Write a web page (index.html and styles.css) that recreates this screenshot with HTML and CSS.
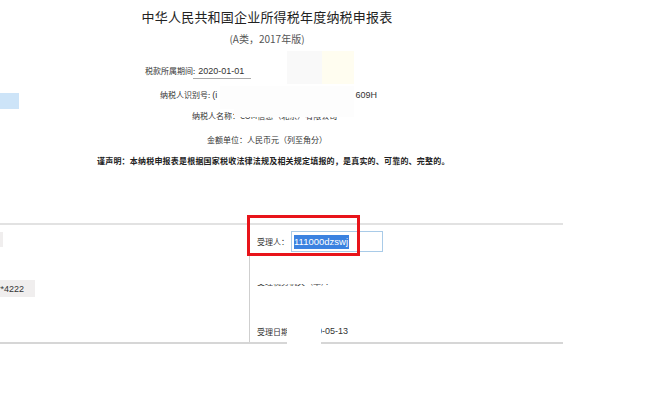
FILE: index.html
```html
<!DOCTYPE html>
<html lang="zh">
<head>
<meta charset="utf-8">
<title>企业所得税年度纳税申报表</title>
<link rel="stylesheet" href="styles.css">
</head>
<body>
<div class="page">
  <div class="head">
    <div class="title">中华人民共和国企业所得税年度纳税申报表</div>
    <div class="sub">(A类，2017年版)</div>
  </div>

  <div class="row r1">
    <span class="lbl">税款所属期间:</span><span class="val under">2020-01-01</span>
  </div>
  <div class="row r2">
    <span class="sel-bit"></span>
    <span class="idline"><span class="lbl">纳税人识别号:</span><span class="val">(i</span><span class="val tail">609H</span></span>
  </div>
  <div class="row r3">
    <span class="lbl">纳税人名称：</span><span class="lbl">COM信息（北京）有限公司</span>
  </div>
  <div class="row r4">
    <span class="lbl">金额单位：人民币元（列至角分）</span>
  </div>
  <div class="row r5">
    <span class="decl">谨声明：本纳税申报表是根据国家税收法律法规及相关规定填报的，是真实的、可靠的、完整的。</span>
  </div>

  <div class="table">
    <div class="col left">
      <div class="box b1"></div>
      <div class="box b2"><span class="val">**4222</span></div>
    </div>
    <div class="col right">
      <div class="frow fa">
        <span class="lbl">受理人：</span>
        <div class="input"><span class="hl">111000dzswj</span></div>
      </div>
      <div class="clip"><span class="lbl">受理税务机关（章）：</span></div>
      <div class="frow fc">
        <span class="lbl">受理日期：</span><span class="val">2020-05-13</span>
      </div>
    </div>
  </div>

  <div class="mask m1"></div>
  <div class="mask m2"></div>
  <div class="mask m3"></div>
  <div class="mask m5"></div>
  <div class="mask m4"></div>
  <div class="redbox"></div>
</div>
</body>
</html>
```
FILE: styles.css
```css
html, body {
  margin: 0;
  padding: 0;
  background: #fff;
}
body {
  font-family: "Noto Sans CJK SC", "Microsoft YaHei", sans-serif;
  color: #333;
}
.page {
  position: relative;
  width: 650px;
  height: 395px;
  overflow: hidden;
}
.head {
  width: 534px;
  text-align: center;
  padding-top: 8px;
}
.title {
  font-size: 13px;
  line-height: 18px;
  color: #222;
  letter-spacing: 0.2px;
}
.sub {
  font-size: 10px;
  line-height: 14px;
  margin-top: 6px;
  color: #555;
}
.row {
  display: flex;
  align-items: center;
  height: 16px;
  line-height: 16px;
  white-space: nowrap;
}
.lbl {
  font-size: 8px;
  color: #333;
}
.val {
  font-family: "Liberation Sans", Arial, sans-serif;
  font-size: 9px;
  color: #333;
}
.r1 {
  margin-top: 17px;
  padding-left: 145px;
}
.under {
  box-sizing: border-box;
  width: 58px;
  height: 16px;
  padding-left: 5px;
  border-bottom: 1px solid #aaa;
  margin-left: -2px;
}
.r2 {
  margin-top: 8px;
  height: 22px;
  align-items: flex-start;
}
.sel-bit {
  width: 19px;
  height: 16px;
  margin-top: 6px;
  background: #cde4f8;
  flex: none;
}
.idline {
  display: flex;
  width: 217px;
  margin-left: 141px;
}
.idline .val { margin-left: 2px; }
.idline .tail { margin-left: auto; }
.r3 {
  margin-top: -1px;
  padding-left: 192px;
}
.r4 {
  margin-top: 8px;
  padding-left: 207px;
}
.r5 {
  margin-top: 5px;
  padding-left: 97px;
}
.decl {
  font-size: 8px;
  font-weight: bold;
  color: #222;
  letter-spacing: 0.2px;
}
.table {
  margin-top: 54px;
  width: 563px;
  height: 117px;
  border-top: 2px solid #e2e2e2;
  border-bottom: 2px solid #d6d6d6;
  display: grid;
  grid-template-columns: 249px 1fr;
}
.col.right {
  border-left: 1px solid #cfcfcf;
  padding-left: 7px;
}
.box {
  background: #f0eeee;
}
.b1 {
  margin-top: 7px;
  width: 3px;
  height: 15px;
}
.b2 {
  margin-top: 33px;
  width: 35px;
  height: 17px;
  display: flex;
  justify-content: flex-end;
  align-items: center;
  overflow: hidden;
  padding-right: 11px;
  box-sizing: border-box;
}
.frow {
  display: flex;
  align-items: center;
  white-space: nowrap;
}
.fa {
  margin-top: 6px;
  height: 21px;
}
.input {
  box-sizing: border-box;
  width: 92px;
  height: 21px;
  margin-left: 2px;
  border: 1px solid #a9cbe8;
  padding-left: 2px;
  display: flex;
  align-items: center;
}
.hl {
  font-family: "Liberation Sans", Arial, sans-serif;
  font-size: 9.5px;
  line-height: 14px;
  background: #3b82e0;
  color: #fff;
  padding-right: 1px;
}
.clip {
  margin-top: 32px;
  height: 3px;
  overflow: hidden;
  white-space: nowrap;
}
.clip .lbl {
  display: block;
  line-height: 10px;
  margin-top: -7px;
  color: #444;
}
.fc {
  margin-top: 36px;
  height: 16px;
}
.fc .val { margin-left: 5px; }

.mask {
  position: absolute;
}
.m1 { left: 287px; top: 51px; width: 35px; height: 33px; background: #f9f9f9; }
.m2 { left: 322px; top: 51px; width: 32px; height: 33px; background: #fffdf0; }
.m3 { left: 220px; top: 86px; width: 134px; height: 23px; background: #fdfdfd; }
.m5 { left: 234px; top: 109px; width: 120px; height: 8px; background: #fdfdfd; }
.m4 { left: 287px; top: 322px; width: 34px; height: 30px; background: #fff; }
.redbox {
  position: absolute;
  left: 247px;
  top: 215px;
  width: 113px;
  height: 41px;
  box-sizing: border-box;
  border: 3px solid #e8141a;
}
```
